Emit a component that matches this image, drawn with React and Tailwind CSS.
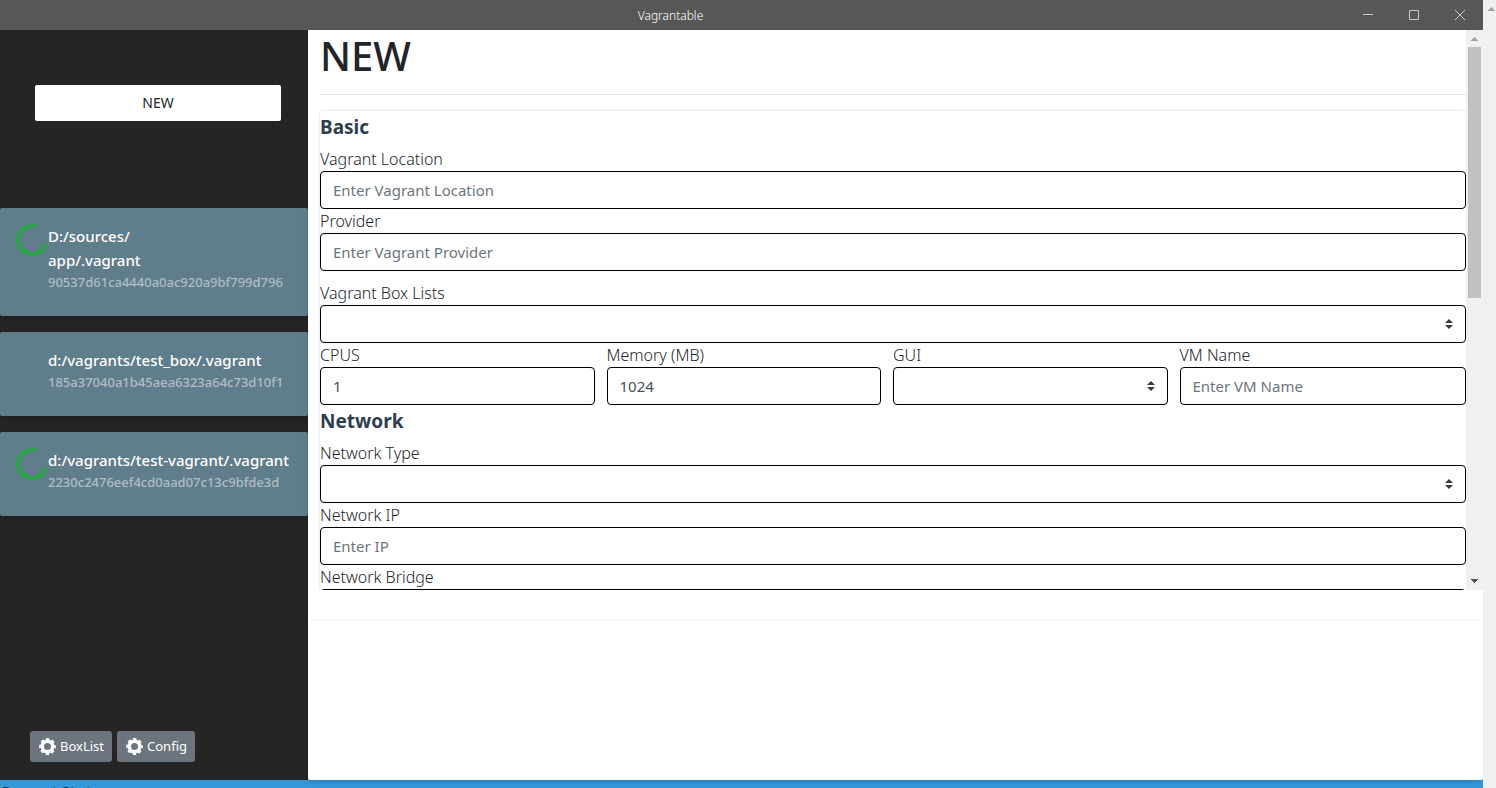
import React from "react";

function UpArrow({ className }) {
  return (
    <svg viewBox="0 0 7 4" width="7" height="4" className={className} fill="currentColor" shapeRendering="crispEdges" aria-hidden="true">
      <path d="M3 0h1v1h1v1h1v1h1v1H0V3h1V2h1V1h1z" />
    </svg>
  );
}

function Gear() {
  return (
    <svg viewBox="0 0 17 17" width="17" height="17" fill="none" stroke="currentColor" aria-hidden="true">
      <circle cx="8.5" cy="8.5" r="5.2" strokeWidth="3.4" />
      <circle cx="8.5" cy="8.5" r="7.2" strokeWidth="2.4" strokeDasharray="3.3 2.355" strokeDashoffset="1.65" />
    </svg>
  );
}

function Spinner() {
  return (
    <svg viewBox="0 0 32 32" width="32" height="32" className="text-[#28a745]" fill="none" stroke="currentColor" strokeWidth="4" aria-label="Running">
      <path d="M19.6 2.5A14 14 0 1 0 29.6 19.6" />
    </svg>
  );
}

function Machine({ lines, id, running }) {
  return (
    <li className="flex rounded-xs bg-[#607d8b] px-4 pt-4 pb-6 shadow-md">
      <div className="w-8 shrink-0">{running && <Spinner />}</div>
      <div className="min-w-0 whitespace-nowrap text-white">
        {lines.map((line) => (
          <div key={line} className="text-[15px] leading-6 font-medium">{line}</div>
        ))}
        <div className="text-[13px] leading-5 font-medium text-white/50">{id}</div>
      </div>
    </li>
  );
}

const control =
  "block h-[38px] w-full appearance-none rounded-[4px] border border-black bg-white px-3 text-[15px] text-[#495057] placeholder:text-[#6c757d]";

function Field({ id, label, placeholder, value }) {
  return (
    <div>
      <label htmlFor={id} className="block h-6 text-base leading-[25px] font-light">{label}</label>
      <input id={id} type="text" className={control} placeholder={placeholder} defaultValue={value} />
    </div>
  );
}

function SelectField({ id, label }) {
  return (
    <div>
      <label htmlFor={id} className="block h-6 text-base leading-[25px] font-light">{label}</label>
      <div className="relative">
        <select id={id} className={control}>
          <option value=""></option>
        </select>
        <svg viewBox="0 0 8 10" width="8" height="10" className="pointer-events-none absolute top-3.5 right-[13px] text-[#343a40]" fill="currentColor" aria-hidden="true">
          <path d="M4 0L0 4h8zM0 6h8L4 10z" />
        </svg>
      </div>
    </div>
  );
}

function WindowButton({ label, children }) {
  return (
    <button type="button" aria-label={label} className="flex h-[30px] w-[46px] items-center justify-center text-[#c9c9c9]">
      <svg viewBox="0 0 10 10" width="10" height="10" fill="none" stroke="currentColor" aria-hidden="true">{children}</svg>
    </button>
  );
}

function FooterButton({ children }) {
  return (
    <button type="button" className="flex h-[31px] items-center gap-1 rounded-[3px] bg-[#6c757d] pr-2 pl-[9px] text-[13px] text-white">
      <Gear />
      {children}
    </button>
  );
}

export default function App() {
  return (
    <div className="flex h-screen overflow-hidden bg-[#3498db] font-['Noto_Sans','Open_Sans',sans-serif] text-[#212529]">
      <div className="flex min-w-0 flex-1 flex-col">
        <header className="flex h-[30px] shrink-0 items-center bg-[#575757] text-white">
          <div className="flex-1 pt-px pr-1 text-center text-xs leading-4 font-light">Vagrantable</div>
          <div className="flex">
            <WindowButton label="Minimize"><path d="M0 4.5h10" /></WindowButton>
            <WindowButton label="Maximize"><path d="M.5 .5h9v9h-9z" /></WindowButton>
            <WindowButton label="Close"><path d="M0 0l10 10M10 0L0 10" /></WindowButton>
          </div>
        </header>

        <div className="flex min-h-0 flex-1">
          <aside className="flex w-[308px] shrink-0 flex-col bg-[#252525]">
            <div className="pt-[55px] pr-[27px] pl-[35px]">
              <button type="button" className="h-9 w-full rounded-xs bg-white text-sm">NEW</button>
            </div>
            <ul className="mt-[87px] flex flex-col gap-4">
              <Machine running lines={["D:/sources/", "app/.vagrant"]} id="90537d61ca4440a0ac920a9bf799d796" />
              <Machine lines={["d:/vagrants/test_box/.vagrant"]} id="185a37040a1b45aea6323a64c73d10f1" />
              <Machine running lines={["d:/vagrants/test-vagrant/.vagrant"]} id="2230c2476eef4cd0aad07c13c9bfde3d" />
            </ul>
            <div className="mt-auto flex gap-[5px] pb-[18px] pl-[30px]">
              <FooterButton>BoxList</FooterButton>
              <FooterButton>Config</FooterButton>
            </div>
          </aside>

          <main className="flex min-w-0 flex-1 flex-col rounded-b-xs bg-white shadow-md">
            <div className="flex h-[560px] shrink-0">
              <div className="min-w-0 flex-1 overflow-hidden pl-3">
                <h1 className="text-[40px] leading-[52px] font-medium">NEW</h1>
                <hr className="mt-3 border-[#e5e5e5]" />
                <form className="mt-4 rounded-[4px] shadow-[0_0_3px_rgba(0,0,0,0.15)]">
                  <h2 className="h-9 pt-1 text-[19px] leading-6 font-bold text-[#2c3e50]">Basic</h2>
                  <Field id="location" label="Vagrant Location" placeholder="Enter Vagrant Location" />
                  <Field id="provider" label="Provider" placeholder="Enter Vagrant Provider" />
                  <div className="mt-2.5">
                    <SelectField id="boxes" label="Vagrant Box Lists" />
                  </div>
                  <div className="grid grid-cols-4">
                    <div className="pr-3"><Field id="cpus" label="CPUS" value="1" /></div>
                    <div className="pr-3"><Field id="memory" label="Memory (MB)" value="1024" /></div>
                    <div className="pr-3"><SelectField id="gui" label="GUI" /></div>
                    <Field id="vm" label="VM Name" placeholder="Enter VM Name" />
                  </div>
                  <h2 className="h-9 pt-1 text-[19px] leading-6 font-bold text-[#2c3e50]">Network</h2>
                  <SelectField id="nettype" label="Network Type" />
                  <Field id="ip" label="Network IP" placeholder="Enter IP" />
                  <Field id="bridge" label="Network Bridge" placeholder="Enter Bridge" />
                </form>
              </div>
              <div className="flex w-[17px] shrink-0 flex-col items-center bg-[#f0f0f0] pt-[7px] pb-[7px]" aria-hidden="true">
                <UpArrow className="shrink-0 text-[#a3a3a3]" />
                <div className="mt-1.5 h-[251px] w-[13px] shrink-0 bg-[#c1c1c1]" />
                <UpArrow className="mt-auto shrink-0 rotate-180 text-[#505050]" />
              </div>
            </div>
            <div className="mt-[29px] flex-1 rounded-xs border-t border-[#f5f5f5]" />
          </main>
        </div>

        <footer className="h-2 shrink-0 overflow-hidden">
          <p className="text-[15px] leading-[22px] font-bold">Current Status</p>
        </footer>
      </div>
      <div className="flex w-[13px] shrink-0 justify-end bg-[#f0f0f0] pt-[7px] pr-px" aria-hidden="true">
        <UpArrow className="text-[#a3a3a3]" />
      </div>
    </div>
  );
}
